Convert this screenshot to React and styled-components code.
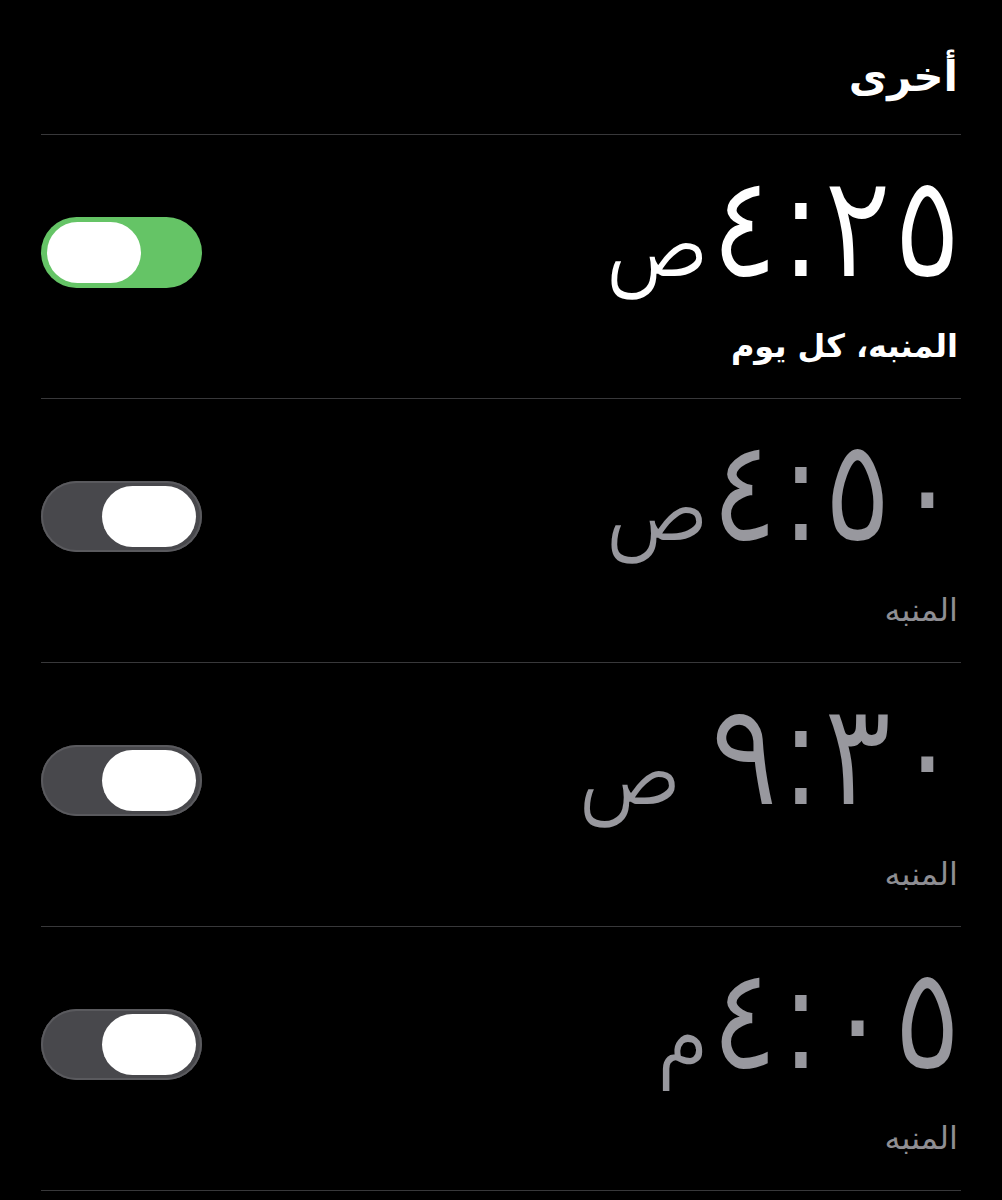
import React from "react";
import styled, { createGlobalStyle } from "styled-components";

const Global = createGlobalStyle`
  html, body { margin: 0; padding: 0; background: #000; }
  body { font-family: "DejaVu Sans", "Noto Sans", sans-serif; }
`;

const Page = styled.div`
  direction: rtl;
  background: #000;
  min-height: 1200px;
  padding: 0 44px 0 41px;
  box-sizing: border-box;
`;

const Header = styled.h2`
  margin: 0 -3px 0 0;
  height: 135px;
  display: flex;
  align-items: center;
  padding: 18px 3px 0 0;
  box-sizing: border-box;
  color: #fff;
  font-size: 42px;
  font-weight: 700;
  border-bottom: 1.5px solid #38383a;
`;

const Row = styled.div`
  height: 264px;
  box-sizing: border-box;
  display: flex;
  align-items: center;
  justify-content: space-between;
  border-bottom: 1.5px solid #38383a;
  margin-right: -3px;
  padding-right: 3px;
`;

const Info = styled.div`
  display: flex;
  flex-direction: column;
  align-items: flex-start;
  margin-bottom: 16px;
`;

const Time = styled.div`
  color: ${(p) => (p.$on ? "#fff" : "#98989e")};
  font-family: "DejaVu Sans Condensed", "DejaVu Sans", sans-serif;
  font-size: 144px;
  line-height: 150px;
  letter-spacing: -8px;
  margin-right: -4px;
  white-space: nowrap;
  -webkit-text-stroke: 2px #000;
`;

const Period = styled.span`
  font-size: 96px;
  letter-spacing: 0;
`;

const Label = styled.div`
  color: ${(p) => (p.$on ? "#fff" : "#8e8e93")};
  font-size: 32px;
  font-weight: ${(p) => (p.$on ? 700 : 400)};
  margin-top: 8px;
`;

const Track = styled.div`
  width: 161px;
  height: 71px;
  border-radius: 36px;
  background: ${(p) => (p.$on ? "#65c466" : "#48484c")};
  display: flex;
  align-items: center;
  justify-content: ${(p) => (p.$on ? "flex-start" : "flex-end")};
  padding: 0 6px;
  box-sizing: border-box;
  margin-bottom: 28px;
  box-shadow: ${(p) => (p.$on ? "none" : "inset 0 0 0 2px #5a5a5e")};
`;

const Knob = styled.div`
  width: 94px;
  height: 61px;
  border-radius: 31px;
  background: #fff;
`;

const alarms = [
  { time: "٤:٢٥", period: "ص", label: "المنبه، كل يوم", on: true },
  { time: "٤:٥٠", period: "ص", label: "المنبه", on: false },
  { time: "٩:٣٠", period: " ص", label: "المنبه", on: false },
  { time: "٤:٠٥", period: "م", label: "المنبه", on: false },
];

export default function App() {
  return (
    <>
      <Global />
      <Page>
        <Header>أخرى</Header>
        {alarms.map((a, i) => (
          <Row key={i}>
            <Info>
              <Time $on={a.on}>
                {a.time}
                <Period>{a.period}</Period>
              </Time>
              <Label $on={a.on}>{a.label}</Label>
            </Info>
            <Track $on={a.on} dir="ltr">
              <Knob />
            </Track>
          </Row>
        ))}
      </Page>
    </>
  );
}
